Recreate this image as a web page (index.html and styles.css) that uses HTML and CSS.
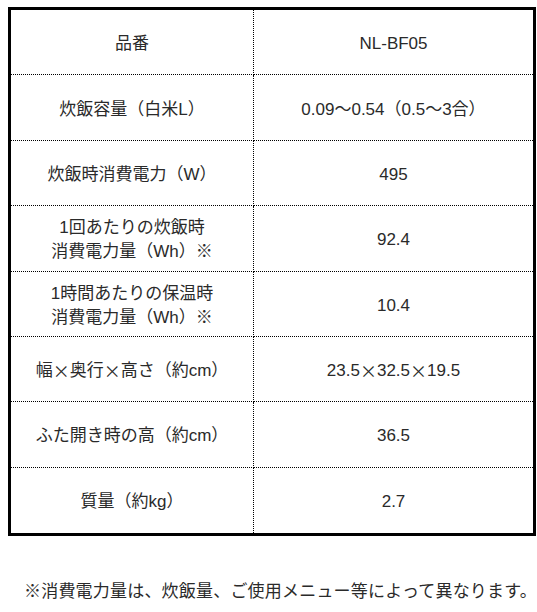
FILE: index.html
```html
<!DOCTYPE html>
<html lang="ja">
<head>
<meta charset="utf-8">
<link rel="stylesheet" href="styles.css">
</head>
<body>
<div class="spec">
  <div class="cell label">品番</div><div class="cell value">NL-BF05</div>
  <div class="cell label">炊飯容量（白米L）</div><div class="cell value">0.09～0.54（0.5～3合）</div>
  <div class="cell label">炊飯時消費電力（W）</div><div class="cell value">495</div>
  <div class="cell label">1回あたりの炊飯時<br>消費電力量（Wh）※</div><div class="cell value">92.4</div>
  <div class="cell label">1時間あたりの保温時<br>消費電力量（Wh）※</div><div class="cell value">10.4</div>
  <div class="cell label">幅<span class="cjk">×</span>奥行<span class="cjk">×</span>高さ（約cm）</div><div class="cell value">23.5<span class="cjk">×</span>32.5<span class="cjk">×</span>19.5</div>
  <div class="cell label">ふた開き時の高（約cm）</div><div class="cell value">36.5</div>
  <div class="cell label last">質量（約kg）</div><div class="cell value last">2.7</div>
</div>
<p class="note">※消費電力量は、炊飯量、ご使用メニュー等によって異なります。</p>
</body>
</html>
```

FILE: styles.css
```css
html, body {
  margin: 0;
  padding: 0;
  background: #fff;
}
body {
  font-family: "Liberation Sans", "Noto Sans CJK JP", sans-serif;
  color: #2a2a2a;
  padding: 7px 0 0 8px;
}
.spec {
  width: 528px;
  height: 529px;
  box-sizing: border-box;
  border: 3px solid #000;
  display: grid;
  grid-template-columns: 243px 1fr;
  grid-template-rows: repeat(8, 1fr);
}
.cell {
  display: flex;
  align-items: center;
  justify-content: center;
  text-align: center;
  font-size: 17px;
  line-height: 24px;
  padding-top: 4px;
  border-bottom: 1px dotted #000;
}
.cjk {
  font-family: "Noto Sans CJK JP", sans-serif;
}
.label {
  border-right: 1px dotted #000;
}
.cell.last {
  border-bottom: none;
}
.note {
  margin: 42px 0 0 16px;
  font-family: "Noto Sans CJK JP", sans-serif;
  font-size: 17px;
  letter-spacing: 0.2px;
  line-height: 24px;
  white-space: nowrap;
}
```
